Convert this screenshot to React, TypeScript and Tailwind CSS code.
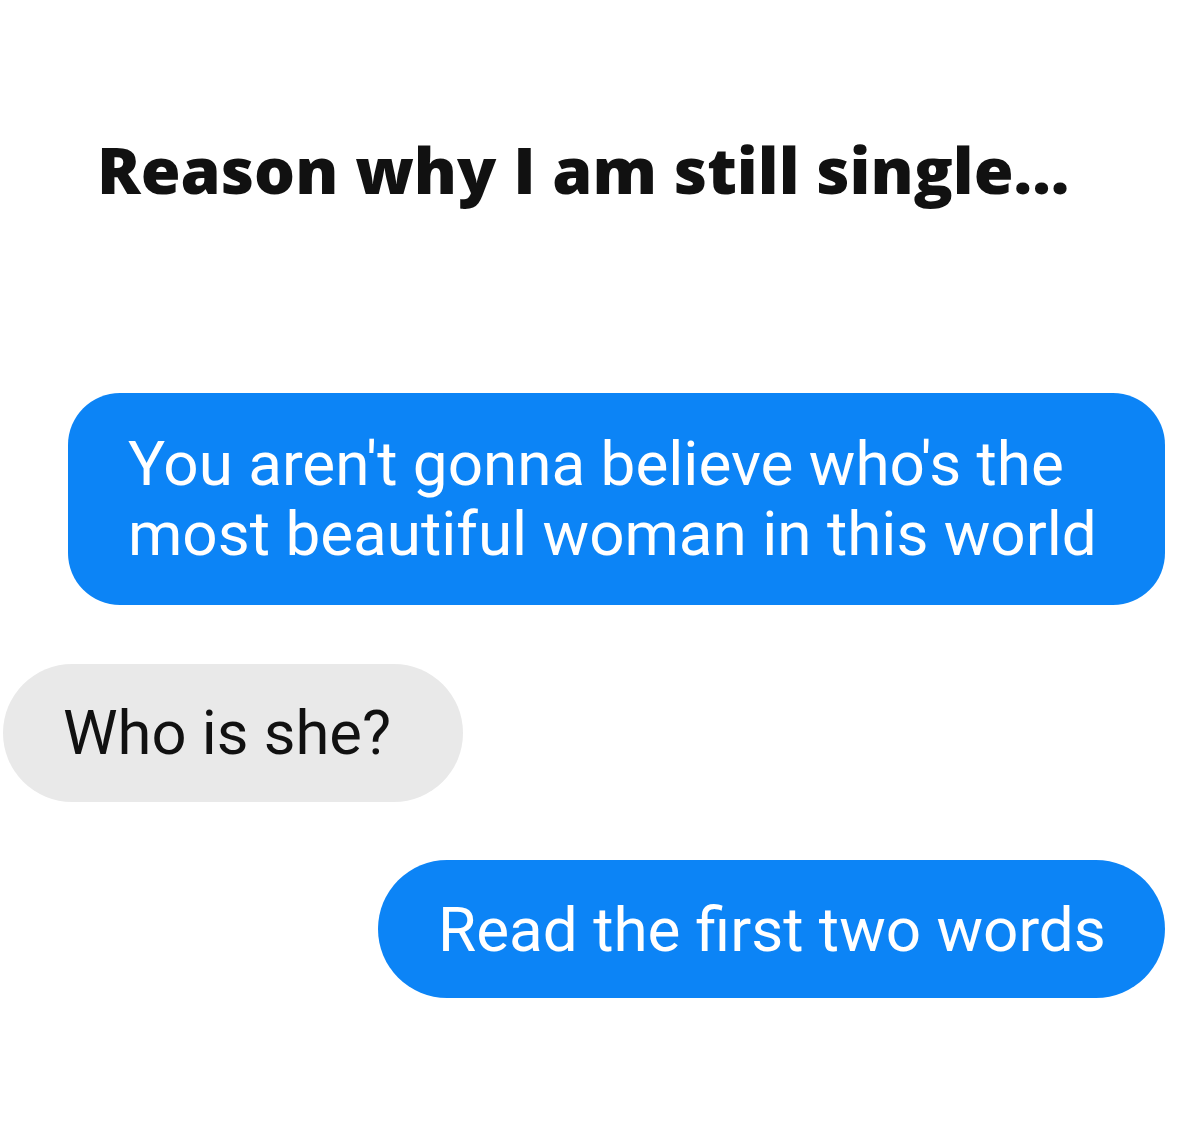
import React from "react";

export default function App() {
  return (
    <div className="w-[1179px] h-[1147px] bg-white flex flex-col overflow-hidden font-[Roboto,sans-serif]">
      <h1 className="mt-[129px] ml-[97px] text-[64.5px] leading-[80px] font-extrabold text-[#111111] whitespace-nowrap font-['Open_Sans',sans-serif]">
        Reason why I am still single...
      </h1>
      <div className="mt-[184px] ml-[68px] w-[1097px] h-[212px] rounded-[52px] bg-[#0c84f6] flex flex-col justify-center pl-[60px] text-white text-[62px] leading-[70px] whitespace-nowrap">
        <span>You aren't gonna believe who's the</span>
        <span>most beautiful woman in this world</span>
      </div>
      <div className="mt-[59px] ml-[3px] w-[460px] h-[138px] rounded-[69px] bg-[#e9e9e9] flex items-center pl-[60px] text-[#111111] text-[61.5px] whitespace-nowrap">
        Who is she?
      </div>
      <div className="mt-[58px] ml-[378px] w-[787px] h-[138px] rounded-[69px] bg-[#0c84f6] flex items-center pl-[60px] text-white text-[62px] whitespace-nowrap">
        Read the first two words
      </div>
    </div>
  );
}
